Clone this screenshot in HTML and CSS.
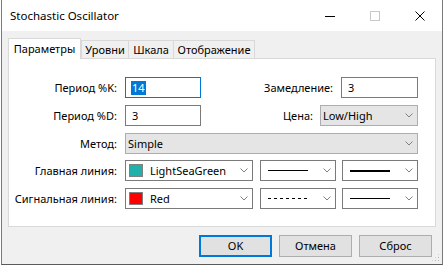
FILE: index.html
```html
<!DOCTYPE html>
<html>
<head>
<meta charset="utf-8">
<link rel="stylesheet" href="styles.css">
</head>
<body>
<div class="window">
  <div class="titlebar">
    <span class="title">Stochastic Oscillator</span>
    <div class="controls">
      <span class="ctl"><svg width="10" height="10" viewBox="0 0 10 10"><line x1="0" y1="5.5" x2="10" y2="5.5" stroke="#000" stroke-width="1"/></svg></span>
      <span class="ctl"><svg width="10" height="10" viewBox="0 0 10 10"><rect x="0.5" y="0.5" width="9" height="9" fill="none" stroke="#c8c8c8"/></svg></span>
      <span class="ctl"><svg width="10" height="10" viewBox="0 0 10 10"><path d="M0.5 0.5 L9.5 9.5 M9.5 0.5 L0.5 9.5" stroke="#000" stroke-width="1"/></svg></span>
    </div>
  </div>
  <div class="client">
    <div class="tabs">
      <div class="tab active">Параметры</div>
      <div class="tab t1">Уровни</div>
      <div class="tab t2">Шкала</div>
      <div class="tab t3">Отображение</div>
    </div>
    <div class="panel">
      <div class="row">
        <label class="lbl">Период %K:</label>
        <div class="edit focus w76"><span class="sel">14</span></div>
        <div class="spacer"></div>
        <label class="rlbl">Замедление:</label>
        <div class="edit w77">3</div>
      </div>
      <div class="row">
        <label class="lbl">Период %D:</label>
        <div class="edit w76">3</div>
        <div class="spacer"></div>
        <label class="rlbl r2">Цена:</label>
        <div class="combo gray w98"><span class="ctext">Low/High</span><svg class="chev" width="8" height="5" viewBox="0 0 8 5"><polyline points="0.5,0.5 4,4 7.5,0.5" fill="none" stroke="#808080"/></svg></div>
      </div>
      <div class="row">
        <label class="lbl">Метод:</label>
        <div class="combo gray grow"><span class="ctext">Simple</span><svg class="chev" width="8" height="5" viewBox="0 0 8 5"><polyline points="0.5,0.5 4,4 7.5,0.5" fill="none" stroke="#808080"/></svg></div>
      </div>
      <div class="row r4">
        <label class="lbl">Главная линия:</label>
        <div class="combo white w128"><span class="swatch sea"></span><span class="ctext ct2">LightSeaGreen</span><svg class="chev" width="8" height="5" viewBox="0 0 8 5"><polyline points="0.5,0.5 4,4 7.5,0.5" fill="none" stroke="#808080"/></svg></div>
        <div class="combo white w76 g8"><span class="line solid"></span><svg class="chev" width="8" height="5" viewBox="0 0 8 5"><polyline points="0.5,0.5 4,4 7.5,0.5" fill="none" stroke="#808080"/></svg></div>
        <div class="combo white w76 g7"><span class="line thick"></span><svg class="chev" width="8" height="5" viewBox="0 0 8 5"><polyline points="0.5,0.5 4,4 7.5,0.5" fill="none" stroke="#808080"/></svg></div>
      </div>
      <div class="row r5">
        <label class="lbl">Сигнальная линия:</label>
        <div class="combo white w128"><span class="swatch red"></span><span class="ctext ct2">Red</span><svg class="chev" width="8" height="5" viewBox="0 0 8 5"><polyline points="0.5,0.5 4,4 7.5,0.5" fill="none" stroke="#808080"/></svg></div>
        <div class="combo white w76 g8"><span class="line dashed"></span><svg class="chev" width="8" height="5" viewBox="0 0 8 5"><polyline points="0.5,0.5 4,4 7.5,0.5" fill="none" stroke="#808080"/></svg></div>
        <div class="combo white w76 g7"><span class="line thin"></span><svg class="chev" width="8" height="5" viewBox="0 0 8 5"><polyline points="0.5,0.5 4,4 7.5,0.5" fill="none" stroke="#808080"/></svg></div>
      </div>
    </div>
    <div class="buttons">
      <div class="btn default">OK</div>
      <div class="btn">Отмена</div>
      <div class="btn">Сброс</div>
    </div>
    <div class="grip"></div>
  </div>
</div>
</body>
</html>
```
FILE: styles.css
```css
* { box-sizing: border-box; }
html, body { margin: 0; padding: 0; }
body {
  width: 444px;
  height: 266px;
  background: #ffffff;
  font-family: "Segoe UI", "Noto Sans", "Open Sans", sans-serif;
  font-size: 11px;
  color: #000;
  overflow: hidden;
}
.window {
  margin-left: 1px;
  width: 442px;
  height: 265px;
  border-left: 1px solid #7a7a7a;
  border-right: 1px solid #7a7a7a;
  border-bottom: 1px solid #5a5a5a;
  display: flex;
  flex-direction: column;
}
.titlebar {
  height: 31px;
  background: #fff;
  display: flex;
  align-items: center;
  padding-left: 8px;
}
.title {
  font-size: 11.5px;
  flex: 1;
  padding-bottom: 1px;
}
.controls {
  display: flex;
  height: 31px;
  align-items: center;
}
.ctl {
  width: 45px;
  display: flex;
  justify-content: center;
  align-items: center;
  height: 31px;
}
.ctl svg { display: block; }
.client {
  flex: 1;
  background: #f0f0f0;
  padding: 8px 0 0 6px;
  position: relative;
}
.tabs {
  display: flex;
  height: 19px;
  align-items: flex-end;
  position: relative;
  z-index: 1;
}
.tab {
  height: 18px;
  border: 1px solid #d9d9d9;
  border-bottom: none;
  background: #f0f0f0;
  text-align: center;
  line-height: 17px;
  margin-left: -1px;
  white-space: nowrap;
}
.tab.t1 { width: 48px; margin-left: 0; }
.tab.t2 { width: 46px; }
.tab.t3 { width: 82px; }
.tab.active {
  height: 21px;
  margin-bottom: -1px;
  background: #fff;
  margin-left: 0;
  line-height: 20px;
  width: 73px;
}
.panel {
  width: 428px;
  height: 169px;
  background: #fff;
  border: 1px solid #d9d9d9;
  padding: 18px 17px 0 0;
  display: flex;
  flex-direction: column;
  gap: 7px;
}
.row {
  display: flex;
  align-items: center;
  height: 21px;
}
.row.r4 { margin-top: -1px; }
.lbl {
  width: 108px;
  text-align: right;
  margin-right: 8px;
  white-space: nowrap;
}
.rlbl { margin-right: 8px; }
.rlbl.r2 { margin-right: 7px; }
.spacer { flex: 1; }
.edit {
  height: 21px;
  border: 1px solid #7a7a7a;
  background: #fff;
  padding-left: 6px;
  line-height: 19px;
}
.edit.focus { border-color: #0078d7; padding-left: 5px; }
.sel {
  background: #0078d7;
  color: #fff;
  display: inline-block;
  line-height: 14px;
  padding: 0 1px;
}
.w76 { width: 76px; }
.w77 { width: 77px; }
.w98 { width: 98px; }
.w128 { width: 128px; }
.grow { flex: 1; }
.g8 { margin-left: 7px; }
.g7 { margin-left: 6px; }
.combo {
  height: 21px;
  border: 1px solid #adadad;
  display: flex;
  align-items: center;
  padding-left: 2px;
  padding-right: 4px;
}
.combo.gray { background: #e5e5e5; }
.combo.white { background: #fff; border-color: #7a7a7a; padding-left: 3px; }
.ctext { flex: 1; white-space: nowrap; }
.ct2 { padding-left: 7px; }
.chev { display: block; flex: none; }
.swatch {
  width: 14px;
  height: 13px;
  border: 1px solid #808080;
  flex: none;
}
.swatch.sea { background: #20b2aa; }
.swatch.red { background: #ff0000; }
.line {
  flex: 1;
  margin: 0 15px 0 4px;
  height: 0;
}
.line.solid { border-top: 1px solid #000; }
.line.thin { border-top: 1px solid #000; }
.line.thick { border-top: 2px solid #000; }
.line.dashed {
  height: 1px;
  background: repeating-linear-gradient(to right, #000 0 3px, transparent 3px 6px);
}
.buttons {
  display: flex;
  justify-content: flex-end;
  gap: 7px;
  padding: 8px 10px 0 0;
}
.btn {
  width: 73px;
  height: 22px;
  border: 1px solid #adadad;
  background: #e1e1e1;
  text-align: center;
  line-height: 20px;
}
.btn.default {
  border: 2px solid #0078d7;
  line-height: 18px;
}
.grip {
  position: absolute;
  right: 2px;
  bottom: 2px;
  width: 9px;
  height: 9px;
  background: radial-gradient(circle, #b5b5b5 0.8px, transparent 1px) 0 0 / 3px 3px;
  clip-path: polygon(100% 0, 100% 100%, 0 100%);
}
```
